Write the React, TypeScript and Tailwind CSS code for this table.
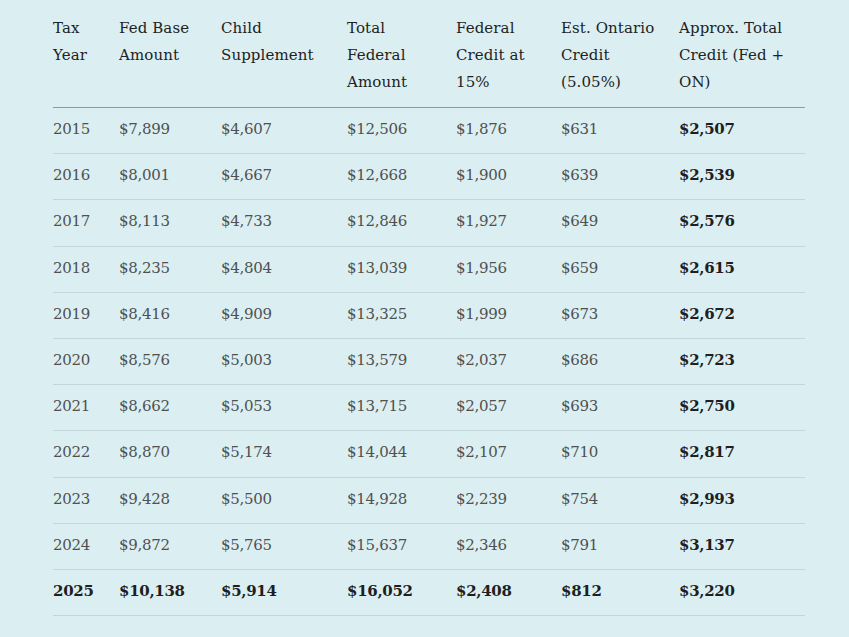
import React from "react";

const rows: string[][] = [
  ["2015", "$7,899", "$4,607", "$12,506", "$1,876", "$631", "$2,507"],
  ["2016", "$8,001", "$4,667", "$12,668", "$1,900", "$639", "$2,539"],
  ["2017", "$8,113", "$4,733", "$12,846", "$1,927", "$649", "$2,576"],
  ["2018", "$8,235", "$4,804", "$13,039", "$1,956", "$659", "$2,615"],
  ["2019", "$8,416", "$4,909", "$13,325", "$1,999", "$673", "$2,672"],
  ["2020", "$8,576", "$5,003", "$13,579", "$2,037", "$686", "$2,723"],
  ["2021", "$8,662", "$5,053", "$13,715", "$2,057", "$693", "$2,750"],
  ["2022", "$8,870", "$5,174", "$14,044", "$2,107", "$710", "$2,817"],
  ["2023", "$9,428", "$5,500", "$14,928", "$2,239", "$754", "$2,993"],
  ["2024", "$9,872", "$5,765", "$15,637", "$2,346", "$791", "$3,137"],
  ["2025", "$10,138", "$5,914", "$16,052", "$2,408", "$812", "$3,220"],
];

const headers: React.ReactNode[] = [
  <>Tax<br />Year</>,
  <>Fed Base<br />Amount</>,
  <>Child<br />Supplement</>,
  <>Total<br />Federal<br />Amount</>,
  <>Federal<br />Credit at<br />15%</>,
  <>Est. Ontario<br />Credit<br />(5.05%)</>,
  <>Approx. Total<br />Credit (Fed +<br />ON)</>,
];

export default function App() {
  return (
    <div
      className="min-h-[637px] w-full bg-[#dbeff2] pl-[53px] pt-[2px]"
      style={{ fontFamily: '"DejaVu Serif", "Liberation Serif", serif' }}
    >
      <table className="w-[752px] table-fixed border-collapse text-[15px]">
        <colgroup>
          <col className="w-[66px]" />
          <col className="w-[102px]" />
          <col className="w-[126px]" />
          <col className="w-[109px]" />
          <col className="w-[105px]" />
          <col className="w-[118px]" />
          <col className="w-[126px]" />
        </colgroup>
        <thead>
          <tr className="border-b border-[#8e9c9e]">
            {headers.map((h, i) => (
              <th
                key={i}
                className="p-0 pt-[13px] pb-[11px] text-left align-top font-normal leading-[27px] text-[#222222] tracking-[0.1px]"
              >
                {h}
              </th>
            ))}
          </tr>
        </thead>
        <tbody>
          {rows.map((r, ri) => {
            const last = ri === rows.length - 1;
            return (
              <tr key={ri} className="border-b border-[#c3d6d9]">
                {r.map((c, ci) => (
                  <td
                    key={ci}
                    className={
                      "p-0 pt-[11px] pb-[13px] leading-[21.2px] tracking-[-0.3px] " +
                      (last || ci === 6
                        ? "font-bold text-[#1f1f1f]"
                        : "text-[#505050]")
                    }
                  >
                    {c}
                  </td>
                ))}
              </tr>
            );
          })}
        </tbody>
      </table>
    </div>
  );
}
